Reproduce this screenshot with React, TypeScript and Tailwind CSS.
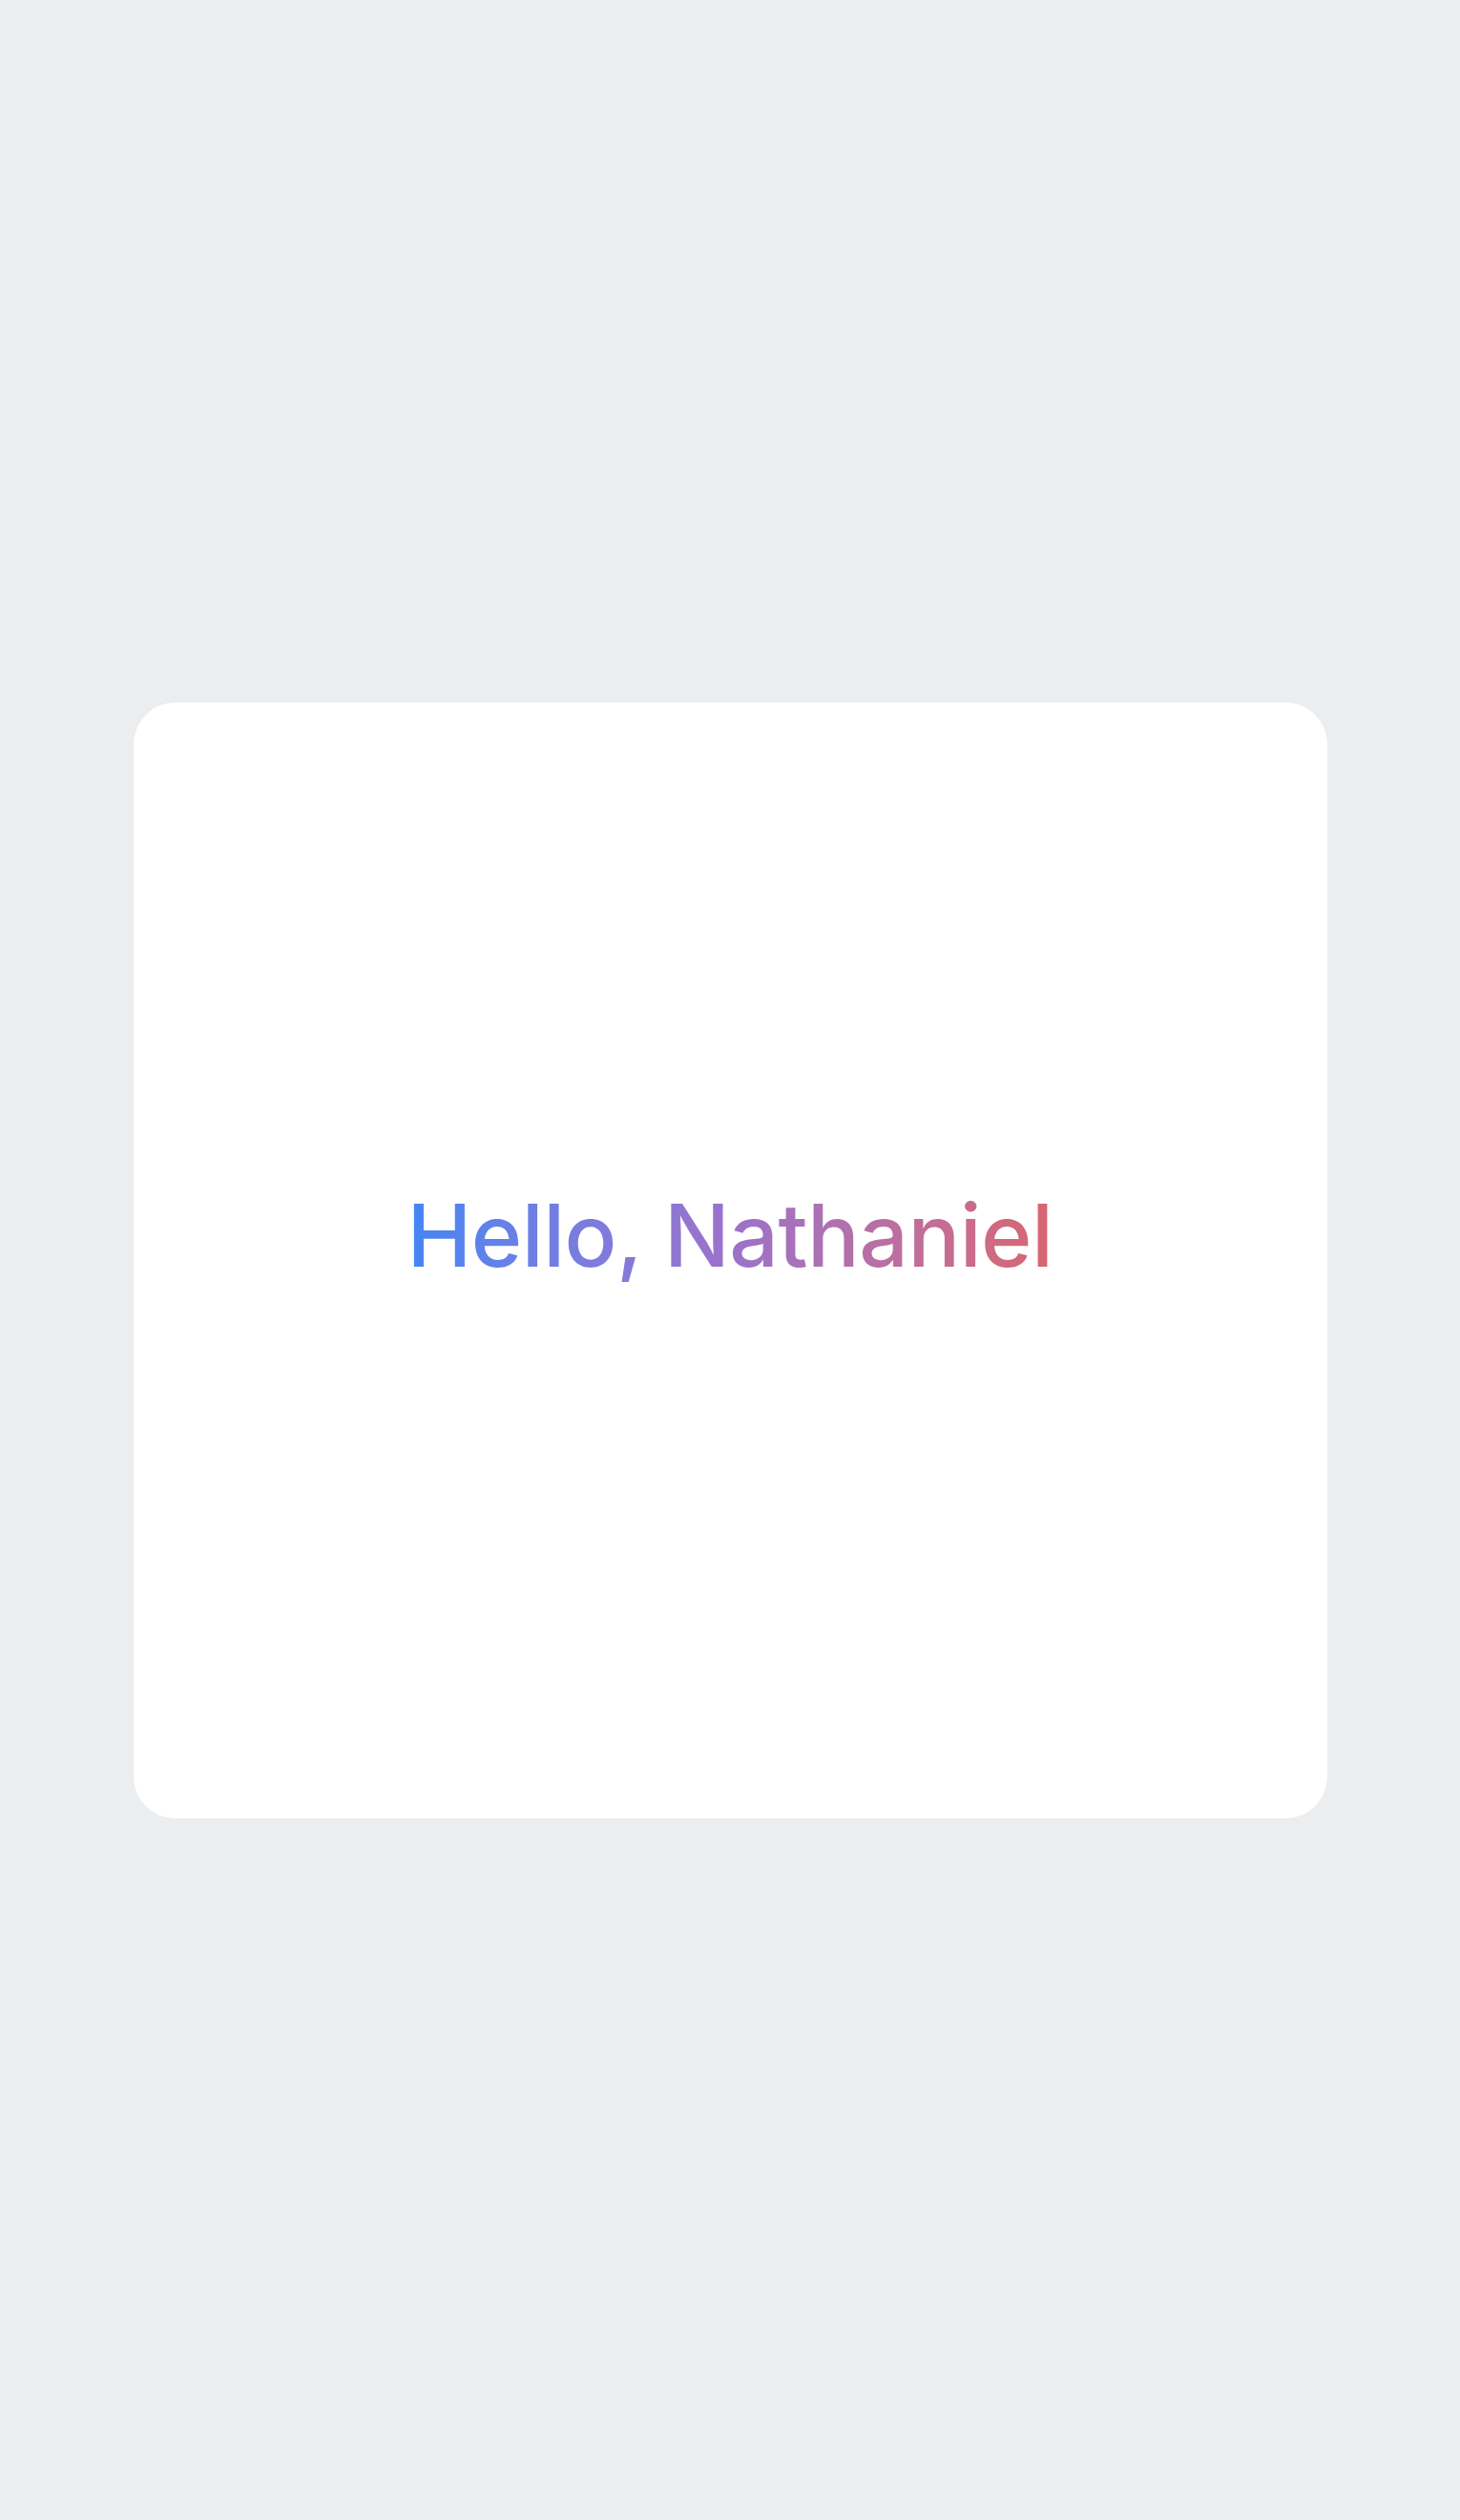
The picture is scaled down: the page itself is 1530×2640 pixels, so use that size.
import React from "react";

export default function App() {
  return (
    <div className="flex h-[2640px] w-full items-center justify-center bg-[#ecedef]">
      <div className="flex h-[1169px] w-[1251px] items-center justify-center rounded-[44px] bg-white">
        <h1
          className="bg-gradient-to-r from-[#4285f4] via-[#9b72cb] to-[#d96570] bg-clip-text pb-[52px] text-[91px] font-medium leading-none tracking-[-0.5px] text-transparent"
          style={{ fontFamily: "Inter, 'Open Sans', sans-serif" }}
        >
          Hello, Nathaniel
        </h1>
      </div>
    </div>
  );
}
